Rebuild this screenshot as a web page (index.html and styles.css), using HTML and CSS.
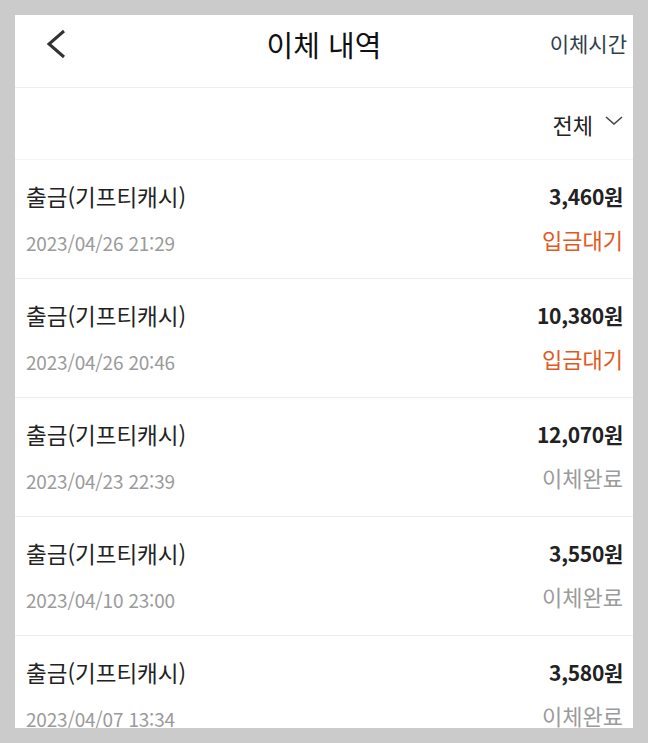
FILE: index.html
```html
<!DOCTYPE html>
<html lang="ko">
<head>
  <meta charset="UTF-8">
  <title>이체 내역</title>
  <link rel="stylesheet" href="styles.css">
</head>
<body>
  <div class="screen">
    <div class="header">
      <span class="back">
        <svg width="22" height="30" viewBox="0 0 22 30"><path d="M19 2 L4 15 L19 28" fill="none" stroke="#333" stroke-width="3"/></svg>
      </span>
      <h1 class="title">이체 내역</h1>
      <span class="sort">이체시간</span>
    </div>

    <div class="filter">
      <span>전체</span>
      <svg width="18" height="12" viewBox="0 0 18 12"><path d="M1 2 L9 9 L17 2" fill="none" stroke="#444" stroke-width="1.6"/></svg>
    </div>

    <ul class="list">
      <li class="row">
        <div class="col">
          <div class="name">출금(기프티캐시)</div>
          <div class="date">2023/04/26 21:29</div>
        </div>
        <div class="col right">
          <div class="amount">3,460원</div>
          <div class="status pending">입금대기</div>
        </div>
      </li>
      <li class="row">
        <div class="col">
          <div class="name">출금(기프티캐시)</div>
          <div class="date">2023/04/26 20:46</div>
        </div>
        <div class="col right">
          <div class="amount">10,380원</div>
          <div class="status pending">입금대기</div>
        </div>
      </li>
      <li class="row">
        <div class="col">
          <div class="name">출금(기프티캐시)</div>
          <div class="date">2023/04/23 22:39</div>
        </div>
        <div class="col right">
          <div class="amount">12,070원</div>
          <div class="status">이체완료</div>
        </div>
      </li>
      <li class="row">
        <div class="col">
          <div class="name">출금(기프티캐시)</div>
          <div class="date">2023/04/10 23:00</div>
        </div>
        <div class="col right">
          <div class="amount">3,550원</div>
          <div class="status">이체완료</div>
        </div>
      </li>
      <li class="row">
        <div class="col">
          <div class="name">출금(기프티캐시)</div>
          <div class="date">2023/04/07 13:34</div>
        </div>
        <div class="col right">
          <div class="amount">3,580원</div>
          <div class="status">이체완료</div>
        </div>
      </li>
    </ul>
  </div>
</body>
</html>
```

FILE: styles.css
```css
html, body {
  margin: 0;
  height: 100%;
}
body {
  font-family: "Noto Sans CJK KR", "Noto Sans", sans-serif;
  background-color: #cbcbcb;
  padding: 15px;
  box-sizing: border-box;
  overflow: hidden;
}
.screen {
  background-color: white;
  height: 713px;
  overflow: hidden;
}
.header {
  height: 72px;
  border-bottom: 1px solid #efefef;
  display: flex;
  align-items: center;
  justify-content: space-between;
  padding: 0 6px 0 30px;
  position: relative;
}
.back { display: flex; margin-top: -14px; }
.title {
  position: absolute;
  left: 0;
  right: 0;
  margin: 0;
  text-align: center;
  font-size: 29px;
  font-weight: 400;
  color: #111;
  pointer-events: none;
  top: 8px;
}
.sort {
  font-size: 21px;
  color: #2f3f4c;
  margin-top: -17px;
}
.filter {
  height: 71px;
  border-bottom: 1px solid #f3f3f3;
  display: flex;
  align-items: center;
  justify-content: flex-end;
  gap: 12px;
  padding-right: 10px;
  font-size: 22px;
  color: #222;
}
.filter svg { margin-top: -6px; }
.list {
  list-style: none;
  margin: 0;
  padding: 0;
}
.row {
  display: flex;
  justify-content: space-between;
  padding: 22px 10px 22px 11px;
  border-bottom: 1px solid #ececec;
}
.col {
  display: flex;
  flex-direction: column;
  gap: 20px;
}
.right { align-items: flex-end; gap: 16px; }
.name {
  font-size: 22.5px;
  line-height: 28px;
  color: #222;
}
.date {
  font-size: 19px;
  line-height: 26px;
  color: #9a9a9a;
  letter-spacing: -0.2px;
}
.amount {
  font-size: 21px;
  line-height: 28px;
  font-weight: 700;
  color: #222;
  letter-spacing: -0.3px;
}
.status {
  font-size: 22px;
  line-height: 26px;
  color: #9b9b9b;
}
.status.pending { color: #e2591e; }
```
